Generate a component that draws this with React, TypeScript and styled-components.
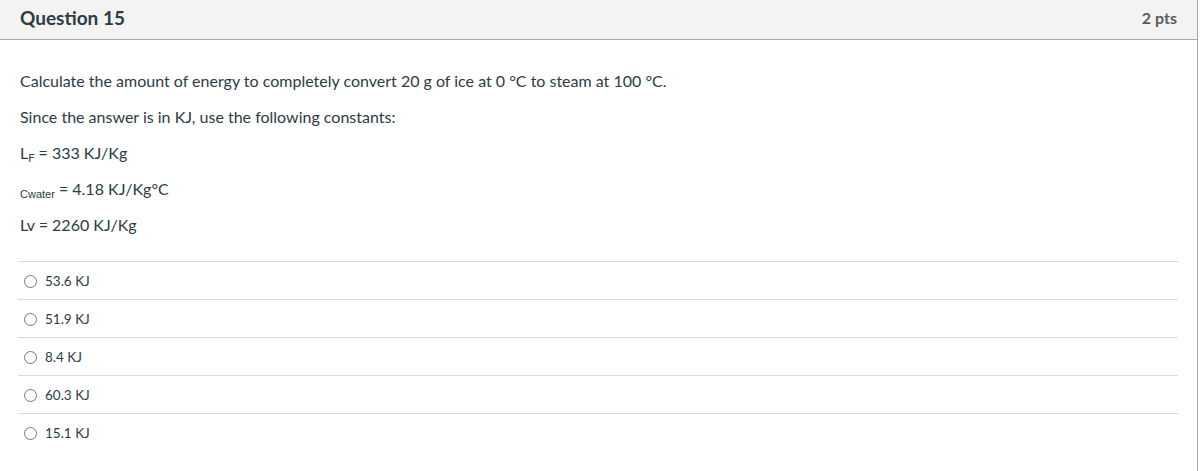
import styled, { createGlobalStyle } from "styled-components";

const GlobalStyle = createGlobalStyle`
  body {
    margin: 0;
    background: #ffffff;
    font-family: Lato, "Open Sans", sans-serif;
    color: #2d3b45;
  }
`;

const Card = styled.div`
  box-sizing: border-box;
  width: 1199px;
  margin-left: -1px;
  border: 1px solid #a9a9a9;
  border-top: none;
  min-height: 471px;
`;

const Header = styled.div`
  box-sizing: border-box;
  display: flex;
  align-items: center;
  justify-content: space-between;
  height: 40px;
  padding: 0 20px 5px;
  background: #f3f3f2;
  border-bottom: 1px solid #a9a9a9;
`;

const Title = styled.h2`
  margin: 0;
  font-size: 19px;
  font-weight: 700;
  color: #2d3b45;
`;

const Points = styled.span`
  font-size: 16px;
  font-weight: 700;
  color: #565d61;
`;

const Body = styled.div`
  padding: 31px 19px 20px 20px;
`;

const Para = styled.p`
  margin: 0 0 16px;
  font-size: 16px;
  line-height: 20px;
  height: 20px;
`;

const Sub = styled.sub`
  font-size: 11px;
  line-height: 0;
  vertical-align: -3px;
`;

const SmallSub = styled.span`
  font-family: "Liberation Sans", Arial, sans-serif;
  font-size: 11px;
  line-height: 0;
  vertical-align: -3px;
`;

const Answers = styled.ul`
  list-style: none;
  margin: 26px 0 0 -2px;
  padding: 0;
`;

const Answer = styled.li`
  display: flex;
  align-items: center;
  height: 37px;
  border-top: 1px solid #d8dadc;
  padding-left: 6px;
  font-size: 13.5px;
`;

const Radio = styled.span`
  box-sizing: border-box;
  width: 13px;
  height: 13px;
  border: 1px solid #767676;
  border-radius: 50%;
  margin-right: 8px;
  margin-top: 1px;
`;

const answers = ["53.6 KJ", "51.9 KJ", "8.4 KJ", "60.3 KJ", "15.1 KJ"];

export default function App() {
  return (
    <>
      <GlobalStyle />
      <Card>
        <Header>
          <Title>Question 15</Title>
          <Points>2 pts</Points>
        </Header>
        <Body>
          <Para>
            Calculate the amount of energy to completely convert 20 g of ice at 0 °C to steam at 100 °C.
          </Para>
          <Para>Since the answer is in KJ, use the following constants:</Para>
          <Para>
            L<Sub>F</Sub> = 333 KJ/Kg
          </Para>
          <Para>
            <SmallSub>Cwater</SmallSub> = 4.18 KJ/Kg°C
          </Para>
          <Para>Lv = 2260 KJ/Kg</Para>
          <Answers>
            {answers.map((a) => (
              <Answer key={a}>
                <Radio />
                {a}
              </Answer>
            ))}
          </Answers>
        </Body>
      </Card>
    </>
  );
}
